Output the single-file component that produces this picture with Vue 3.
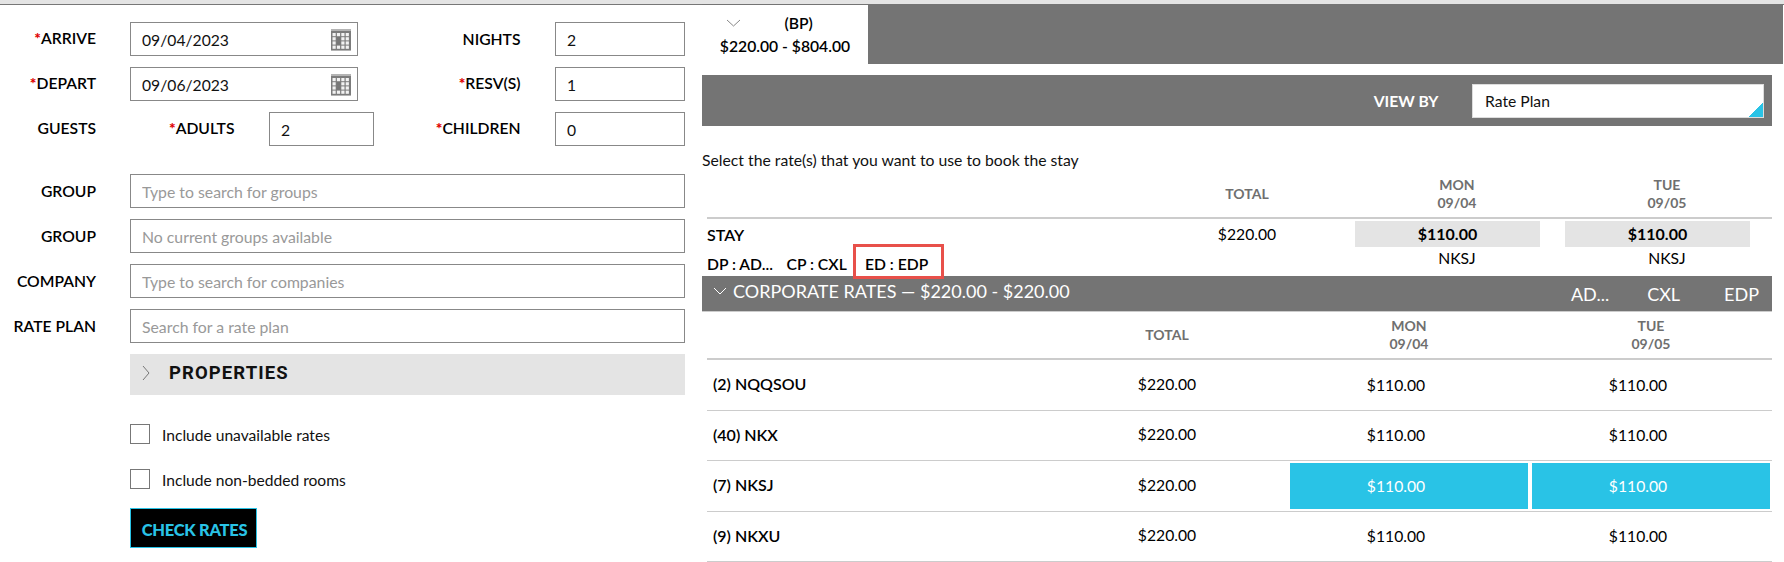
<script setup>
const searches = [
  { label: 'GROUP', placeholder: 'Type to search for groups' },
  { label: 'GROUP', placeholder: 'No current groups available' },
  { label: 'COMPANY', placeholder: 'Type to search for companies' },
  { label: 'RATE PLAN', placeholder: 'Search for a rate plan' },
]
const rates = [
  { name: '(2) NQQSOU', selected: false },
  { name: '(40) NKX', selected: false },
  { name: '(7) NKSJ', selected: true },
  { name: '(9) NKXU', selected: false },
]
const calCells = [0, 1, 2, 3].flatMap((r) => [0, 1, 2, 3].map((c) => ({ r, c })))
const calFill = (cell) => (cell.c === 1 && (cell.r === 1 || cell.r === 2) ? '#777' : '#f2f2f2')
</script>

<template>
  <div class="page">
    <div class="topline"></div>
    <div class="main">
      <section class="left">
        <div class="row">
          <label class="lab lab-first"><span class="req">*</span>ARRIVE</label>
          <div class="datefield">
            <input class="inp date" value="09/04/2023" />
            <svg class="cal" viewBox="0 0 20 22" width="20" height="22">
              <rect width="20" height="22" fill="#7c7c7c" />
              <rect width="20" height="2" fill="#b4b4b4" />
              <rect y="21" width="20" height="1" fill="#b4b4b4" />
              <rect v-for="cell in calCells" :key="cell.r + '-' + cell.c" :x="1.5 + cell.c * 4.4" :y="4 + cell.r * 4.2" width="3.2" height="3.2" :fill="calFill(cell)" />
            </svg>
          </div>
          <label class="lab lab-mid nudge">NIGHTS</label>
          <input class="inp small" value="2" />
        </div>
        <div class="row">
          <label class="lab lab-first"><span class="req">*</span>DEPART</label>
          <div class="datefield">
            <input class="inp date" value="09/06/2023" />
            <svg class="cal" viewBox="0 0 20 22" width="20" height="22">
              <rect width="20" height="22" fill="#7c7c7c" />
              <rect width="20" height="2" fill="#b4b4b4" />
              <rect y="21" width="20" height="1" fill="#b4b4b4" />
              <rect v-for="cell in calCells" :key="cell.r + '-' + cell.c" :x="1.5 + cell.c * 4.4" :y="4 + cell.r * 4.2" width="3.2" height="3.2" :fill="calFill(cell)" />
            </svg>
          </div>
          <label class="lab lab-mid"><span class="req">*</span>RESV(S)</label>
          <input class="inp small" value="1" />
        </div>
        <div class="row guests">
          <label class="lab lab-first">GUESTS</label>
          <label class="lab lab-adults"><span class="req">*</span>ADULTS</label>
          <input class="inp adults" value="2" />
          <label class="lab lab-children"><span class="req">*</span>CHILDREN</label>
          <input class="inp small" value="0" />
        </div>
        <div v-for="s in searches" :key="s.placeholder" class="row">
          <label class="lab lab-first nudge">{{ s.label }}</label>
          <input class="inp wide" :placeholder="s.placeholder" />
        </div>
        <div class="props">
          <svg class="props-chev" viewBox="0 0 8 16" width="8" height="16"><path d="M1 1l6 7-6 7" fill="none" stroke="#777" stroke-width="1" /></svg>
          <span class="props-text">PROPERTIES</span>
        </div>
        <div class="check first">
          <span class="box"></span><span class="check-text">Include unavailable rates</span>
        </div>
        <div class="check">
          <span class="box"></span><span class="check-text">Include non-bedded rooms</span>
        </div>
        <button class="go">CHECK RATES</button>
      </section>

      <section class="right">
        <div class="tabbar">
          <div class="tab">
            <div class="tab-top">
              <svg viewBox="0 0 15 8" width="15" height="8"><path d="M1 1l6.5 6L14 1" fill="none" stroke="#888" stroke-width="1" /></svg>
              <span class="tab-code">(BP)</span>
            </div>
            <div class="tab-range">$220.00 - $804.00</div>
          </div>
        </div>
        <div class="content">
          <div class="viewbar">
            <span class="viewby">VIEW BY</span>
            <div class="select">Rate Plan</div>
          </div>
          <p class="hint">Select the rate(s) that you want to use to book the stay</p>

          <div class="stay-grid stay-head">
            <div></div>
            <div class="th">TOTAL</div>
            <div class="th">MON<br />09/04</div>
            <div class="th">TUE<br />09/05</div>
          </div>
          <div class="stay-grid stay-row">
            <div class="stay-name">
              <div class="stay-title">STAY</div>
              <div class="policies">
                <span class="p1">DP : AD...</span>
                <span class="p2">CP : CXL</span>
                <span class="p3">ED : EDP<i class="mark"></i></span>
              </div>
            </div>
            <div class="stay-total">$220.00</div>
            <div class="stay-day"><div class="stay-price">$110.00</div><div class="stay-code">NKSJ</div></div>
            <div class="stay-day"><div class="stay-price">$110.00</div><div class="stay-code">NKSJ</div></div>
          </div>

          <div class="corp">
            <svg viewBox="0 0 14 8" width="14" height="8"><path d="M1 1l6 6 6-6" fill="none" stroke="#fff" stroke-width="1" /></svg>
            <span class="corp-title">CORPORATE RATES — $220.00 - $220.00</span>
            <span class="corp-codes">
              <span class="c1">AD...</span><span class="c2">CXL</span><span class="c3">EDP</span>
            </span>
          </div>

          <div class="rate-grid rate-head">
            <div></div>
            <div class="th up">TOTAL</div>
            <div class="th up">MON<br />09/04</div>
            <div class="th up">TUE<br />09/05</div>
          </div>
          <div v-for="r in rates" :key="r.name" class="rate-grid rate-row">
            <div class="rate-name">{{ r.name }}</div>
            <div class="rate-total">$220.00</div>
            <div class="rate-cell" :class="{ on: r.selected }">$110.00</div>
            <div class="rate-cell" :class="{ on: r.selected }">$110.00</div>
          </div>
        </div>
      </section>
    </div>
  </div>
</template>

<style>
html, body { margin: 0; background: #fff; }
</style>

<style scoped>
* { box-sizing: border-box; }
.page {
  width: 1784px;
  height: 562px;
  overflow: hidden;
  background: #fff;
  color: #000;
  font-family: Lato, "Liberation Sans", sans-serif;
  font-size: 15.7px;
}
.topline { height: 5px; background: #e4e4e4; border-bottom: 1px solid #777; }
.main { display: flex; }
.left { width: 702px; padding-top: 17px; flex: none; }
.row { display: flex; align-items: center; height: 34px; margin-bottom: 11px; }
.lab { font-size: 15.7px; font-weight: 600; text-align: right; white-space: nowrap; margin-top: -2px; }
.nudge { margin-top: 0; }
.req { color: #e00000; font-weight: 900; }
.lab-first { width: 96px; margin-right: 34px; }
.lab-mid { width: 162.5px; margin-right: 34.5px; }
.lab-adults { width: 104.5px; margin-right: 34.5px; }
.lab-children { width: 146.5px; margin-right: 34.5px; }
.inp {
  height: 34px;
  border: 1px solid #888;
  background: #fff;
  padding: 2px 11px 0;
  font: 15.7px Lato, "Liberation Sans", sans-serif;
  color: #111;
  outline: none;
  border-radius: 0;
  display: block;
}
.inp::placeholder { color: #999; opacity: 1; }
.datefield { position: relative; width: 228px; height: 34px; }
.date { width: 228px; }
.cal { position: absolute; top: 7px; left: 201px; }
.small { width: 130px; }
.adults { width: 105px; }
.wide { width: 555px; font-size: 15.8px; padding-top: 0; }
.guests { margin-bottom: 28px; }
.props {
  margin: 0 0 0 130px;
  width: 555px;
  height: 41px;
  background: #e4e4e4;
  display: flex;
  align-items: center;
  padding: 0 0 4px 12px;
}
.props-text { margin-left: 19px; font-family: Roboto, sans-serif; font-weight: 700; font-size: 18.5px; letter-spacing: 1.1px; color: #111; }
.check { display: flex; align-items: center; margin-left: 130px; height: 20px; margin-top: 25px; font-size: 15.6px; color: #111; }
.check.first { margin-top: 29px; }
.check-text { padding-top: 2px; }
.box { width: 20px; height: 20px; border: 1px solid #777; margin-right: 12px; background: #fff; }
.go {
  display: block;
  margin: 19px 0 0 130px;
  width: 127px;
  height: 40px;
  background: #000;
  border: 1px solid #29c3e6;
  color: #29c3e6;
  font: 900 16.5px Lato, "Liberation Sans", sans-serif;
  padding: 3px 0 0 2px;
  letter-spacing: -0.3px;
}
.right { flex: 1; min-width: 0; }
.tabbar { height: 60px; margin-top: -1px; background: #747474; display: flex; margin-right: 1px; }
.tab { width: 166px; margin-top: 1px; background: #fff; position: relative; }
.tab-top { height: 27px; display: flex; align-items: center; padding-left: 24px; padding-top: 8px; }
.tab-code { font-size: 15.7px; font-weight: 600; margin-left: 43.5px; }
.tab-range { font-size: 15.7px; font-weight: 600; text-align: center; padding-top: 5px; }
.content { width: 1070px; }
.viewbar {
  margin-top: 11px;
  height: 51px;
  background: #747474;
  display: flex;
  align-items: center;
  justify-content: flex-end;
  padding-right: 8px;
}
.viewby { color: #fff; font-weight: 700; font-size: 15.7px; margin-right: 33.5px; }
.select {
  width: 292px;
  height: 34px;
  background: linear-gradient(135deg, #fff 0, #fff calc(100% - 10px), #29c3e6 calc(100% - 10px));
  border: 1px solid #ddd;
  padding-left: 12px;
  line-height: 33px;
  font-size: 15.7px;
  color: #111;
}
.hint { margin: 24px 0 0; font-size: 15.75px; line-height: 20px; height: 20px; color: #111; }
.stay-grid { display: grid; grid-template-columns: 435px 210px 210px 210px; margin-left: 5px; }
.rate-grid { display: grid; grid-template-columns: 339px 242px 242px 242px; margin-left: 5px; }
.stay-head { height: 49px; border-bottom: 2px solid #ccc; }
.rate-head { height: 48px; border-bottom: 2px solid #ccc; }
.th { color: #6f6f6f; font-weight: 700; font-size: 14px; line-height: 18px; text-align: center; align-self: center; }
.th.up { margin-top: -1px; }
.stay-row { height: 57px; position: relative; }
.stay-title { font-size: 16px; font-weight: 600; line-height: 20px; margin-top: 6px; }
.policies { display: flex; line-height: 20px; margin-top: 9px; font-size: 15.7px; font-weight: 600; }
.p1 { width: 79.5px; }
.p2 { width: 78.5px; }
.p3 { position: relative; }
.mark { position: absolute; top: -10px; left: -12px; width: 90.5px; height: 35px; border: 3px solid #e8504a; z-index: 2; }
.stay-total { text-align: center; font-size: 15.7px; padding-top: 5px; line-height: 20px; }
.stay-day { padding-top: 2px; text-align: center; font-size: 15.7px; }
.stay-price { margin-left: 3px; width: 185px; height: 26px; line-height: 26px; background: #e4e4e4; font-weight: 700; font-size: 16px; }
.stay-code { line-height: 20px; margin-top: 1px; }
.corp {
  height: 36px;
  background: #747474;
  border-bottom: 1px solid #ccc;
  color: #fff;
  display: flex;
  align-items: center;
  padding: 0 13px 6px 11px;
  font-size: 18px;
}
.corp-title { margin-left: 6px; }
.corp-codes { margin-left: auto; display: flex; margin-top: 6px; }
.c2 { margin-left: 38px; }
.c3 { margin-left: 44px; }
.rate-row { height: 50.5px; border-bottom: 1px solid #ccc; align-items: stretch; }
.rate-name { display: flex; align-items: center; padding: 0 0 2px 6px; font-size: 16px; font-weight: 600; }
.rate-total { display: flex; align-items: center; justify-content: center; font-size: 15.7px; padding-bottom: 2px; }
.rate-cell { display: flex; align-items: center; justify-content: center; margin: 2px; padding-right: 26px; font-size: 15.7px; }
.rate-cell.on { background: #29c3e6; color: #fff; }
</style>
